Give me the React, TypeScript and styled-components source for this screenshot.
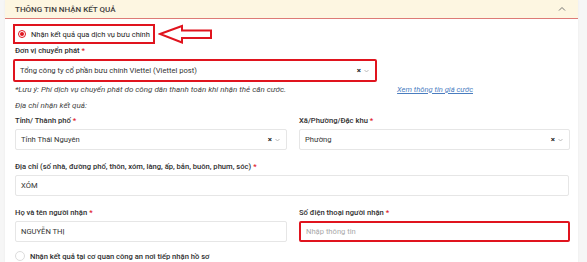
import styled, { createGlobalStyle } from 'styled-components';

const GlobalStyle = createGlobalStyle`
  body {
    margin: 0;
    background: #f6f6f6;
    font-family: Roboto, "Noto Sans", "Liberation Sans", sans-serif;
    color: #333;
  }
`;

const Page = styled.div`
  width: 587px;
  height: 262px;
  overflow: hidden;
  display: flex;
`;

const Panel = styled.div`
  margin-left: 5px;
  width: 573px;
  background: #fff;
  display: flex;
  flex-direction: column;
  box-shadow: 0 0 2px rgb(0 0 0 / 0.06);
`;

const Header = styled.div`
  height: 18px;
  flex-shrink: 0;
  background: #fdf6e1;
  border-bottom: 1.5px solid #dd7b76;
  display: flex;
  align-items: center;
  justify-content: space-between;
  padding: 0 12px 0 10px;
  font-size: 8px;
  font-weight: 500;
  color: #3d3d3d;
  text-transform: uppercase;
`;

const Body = styled.div`
  padding: 4px 9px 0 10px;
  display: flex;
  flex-direction: column;
`;

const Row = styled.div`
  display: flex;
  align-items: center;
`;

const HighlightBox = styled.div`
  border: 2px solid #e0141e;
  margin-left: -2px;
  height: 16px;
  width: 135px;
  box-sizing: content-box;
  display: flex;
  align-items: center;
  padding-left: 3px;
  gap: 5px;
  font-size: 7.5px;
  color: #222;
  white-space: nowrap;
`;

const Radio = styled.span<{ $checked?: boolean }>`
  width: ${(p) => (p.$checked ? 8 : 10)}px;
  height: ${(p) => (p.$checked ? 8 : 10)}px;
  border-radius: 50%;
  box-sizing: border-box;
  border: 1px solid ${(p) => (p.$checked ? '#e0141e' : '#dcdcdc')};
  display: inline-flex;
  align-items: center;
  justify-content: center;
  flex-shrink: 0;
  &::after {
    content: '';
    width: 4px;
    height: 4px;
    border-radius: 50%;
    background: ${(p) => (p.$checked ? '#e0141e' : 'transparent')};
  }
`;

const Label = styled.div<{ $top?: number }>`
  font-size: 7.6px;
  font-weight: 500;
  color: #2e2e2e;
  line-height: 12px;
  margin-top: ${(p) => p.$top ?? 0}px;
  margin-bottom: 2px;
  white-space: nowrap;
`;

const Star = styled.span`
  color: #e0141e;
  margin-left: 2px;
`;

const Note = styled.div<{ $top?: number }>`
  font-size: 8px;
  font-style: italic;
  color: #444;
  line-height: 12px;
  margin-top: ${(p) => p.$top ?? 0}px;
  white-space: nowrap;
`;

const NoteRow = styled.div`
  display: flex;
  align-items: center;
  justify-content: space-between;
  padding-right: 96px;
  margin-top: 2px;
`;

const PriceLink = styled.a`
  font-size: 7.6px;
  font-style: italic;
  color: #4a7dbf;
  text-decoration: underline;
  line-height: 12px;
`;

const Field = styled.div<{ $width?: number; $alert?: boolean; $height?: number }>`
  box-sizing: border-box;
  width: ${(p) => (p.$width ? `${p.$width}px` : '100%')};
  height: ${(p) => p.$height ?? 21}px;
  border: ${(p) => (p.$alert ? '2px solid #e0141e' : '1px solid #e6e6e6')};
  border-radius: 2px;
  display: flex;
  align-items: center;
  padding: 0 6px 0 5px;
  font-size: 7.6px;
  color: #333;
  background: #fff;
`;

const FieldText = styled.span<{ $placeholder?: boolean }>`
  flex: 1;
  white-space: nowrap;
  color: ${(p) => (p.$placeholder ? '#a9a9a9' : '#333')};
`;

const Clear = styled.span`
  font-size: 8px;
  font-weight: 700;
  color: #222;
  margin-right: 3px;
`;

const Grid = styled.div`
  display: grid;
  grid-template-columns: 272px 271px;
  column-gap: 12px;
`;

const Column = styled.div`
  display: flex;
  flex-direction: column;
`;

const BottomRow = styled(Row)`
  margin-top: 9px;
  gap: 5px;
  font-size: 7.6px;
  color: #2e2e2e;
  font-weight: 500;
`;

const Caret = () => (
  <svg width="5" height="4" viewBox="0 0 5 4">
    <path d="M0.5 1 L2.5 3 L4.5 1" fill="none" stroke="#aaa" strokeWidth="0.8" />
  </svg>
);

const Arrow = () => (
  <svg width="56" height="20" viewBox="0 0 56 20" style={{ marginLeft: 3 }}>
    <path
      d="M2 10 L24 2 L24 6.5 L53 6.5 L53 14 L24 14 L24 18.5 Z"
      fill="#fff"
      stroke="#e0141e"
      strokeWidth="2"
      strokeLinejoin="miter"
    />
  </svg>
);

const Chevron = () => (
  <svg width="8" height="6" viewBox="0 0 8 6">
    <path d="M1 4.5 L4 1.5 L7 4.5" fill="none" stroke="#666" strokeWidth="0.9" />
  </svg>
);

const Select = ({ value, width, alert }: { value: string; width?: number; alert?: boolean }) => (
  <Field $width={width} $alert={alert} $height={alert ? 23 : 21} style={alert ? { marginLeft: -2 } : undefined}>
    <FieldText>{value}</FieldText>
    <Clear>×</Clear>
    <Caret />
  </Field>
);

const App = () => (
  <Page>
    <GlobalStyle />
    <Panel>
      <Header>
        <span>Thông tin nhận kết quả</span>
        <Chevron />
      </Header>
      <Body>
        <Row style={{ marginTop: 1 }}>
          <HighlightBox>
            <Radio $checked />
            <span>Nhận kết quả qua dịch vụ bưu chính</span>
          </HighlightBox>
          <Arrow />
        </Row>
        <Label $top={1}>
          Đơn vị chuyển phát<Star>*</Star>
        </Label>
        <Select value="Tổng công ty cổ phần bưu chính Viettel (Viettel post)" width={364} alert />
        <NoteRow>
          <Note>*Lưu ý: Phí dịch vụ chuyển phát do công dân thanh toán khi nhận thẻ căn cước.</Note>
          <PriceLink>Xem thông tin giá cước</PriceLink>
        </NoteRow>
        <Note $top={4}>Địa chỉ nhận kết quả:</Note>
        <Grid style={{ marginTop: 3 }}>
          <Column>
            <Label>
              Tỉnh/ Thành phố<Star>*</Star>
            </Label>
            <Select value="Tỉnh Thái Nguyên" />
          </Column>
          <Column>
            <Label>
              Xã/Phường/Đặc khu<Star>*</Star>
            </Label>
            <Select value="Phường" />
          </Column>
        </Grid>
        <Label $top={11}>
          Địa chỉ (số nhà, đường phố, thôn, xóm, làng, ấp, bản, buôn, phum, sóc)<Star>*</Star>
        </Label>
        <Field>
          <FieldText>XÓM</FieldText>
        </Field>
        <Grid style={{ marginTop: 11 }}>
          <Column>
            <Label>
              Họ và tên người nhận<Star>*</Star>
            </Label>
            <Field>
              <FieldText>NGUYỄN THỊ</FieldText>
            </Field>
          </Column>
          <Column>
            <Label>
              Số điện thoại người nhận<Star>*</Star>
            </Label>
            <Field $alert>
              <FieldText $placeholder>Nhập thông tin</FieldText>
            </Field>
          </Column>
        </Grid>
        <BottomRow>
          <Radio />
          <span>Nhận kết quả tại cơ quan công an nơi tiếp nhận hồ sơ</span>
        </BottomRow>
      </Body>
    </Panel>
  </Page>
);

export default App;
